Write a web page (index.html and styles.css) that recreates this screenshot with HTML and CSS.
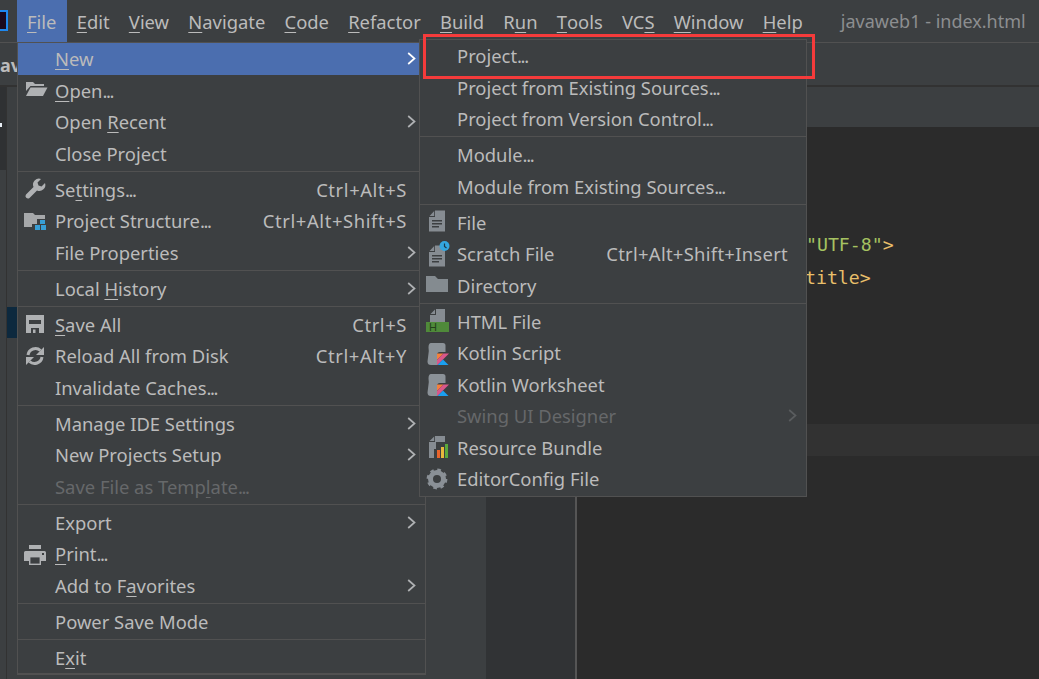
FILE: index.html
```html
<!DOCTYPE html>
<html lang="en">
<head>
<meta charset="utf-8">
<title>javaweb1 - index.html</title>
<link rel="stylesheet" href="styles.css">
</head>
<body>
<svg class="defs" width="0" height="0" aria-hidden="true">
  <defs>
    <symbol id="chev" viewBox="0 0 9 13"><path d="M1.2 1 7.5 6.5 1.2 12" fill="none" stroke="currentColor" stroke-width="1.7"/></symbol>
    <symbol id="doc" viewBox="0 0 24 24"><path d="M9 0.5h10v21H3V7h6zM3.6 6 8.2 1v5z" fill="#868c92"/><path d="M6 10h10v1.4H6zM6 13h10v1.4H6zM6 16h7v1.4H6z" fill="#3c3f41"/></symbol>
    <symbol id="kt" viewBox="0 0 24 24"><path d="M5 2h12a2.500 2.500 0 0 1 2.500 2.500V11H14a3 3 0 0 0-3 3v10H5q-3.500 0-3.500-3.500l1-8q.5-3 0-6Q2.500 2 5 2z" fill="#8b9298"/><path d="M11 12.500h6.500L11 19z" fill="#f5803c"/><path d="M17.500 12.500H23L11 24.500V19z" fill="#d9578a"/><path d="M11 24.500l6-6 6 6z" fill="#1a9ff0"/></symbol>
  </defs>
</svg>

<div class="ide">
  <header class="menubar">
    <span class="logo"></span>
    <nav class="menus">
      <span class="top active"><u>F</u>ile</span>
      <span class="top"><u>E</u>dit</span>
      <span class="top"><u>V</u>iew</span>
      <span class="top"><u>N</u>avigate</span>
      <span class="top"><u>C</u>ode</span>
      <span class="top"><u>R</u>efactor</span>
      <span class="top"><u>B</u>uild</span>
      <span class="top">R<u>u</u>n</span>
      <span class="top"><u>T</u>ools</span>
      <span class="top">VC<u>S</u></span>
      <span class="top"><u>W</u>indow</span>
      <span class="top"><u>H</u>elp</span>
    </nav>
    <span class="title">javaweb1 - index.html</span>
  </header>
  <div class="toolbar"><b class="crumb">av</b></div>
  <div class="main">
    <div class="rail"><div class="rail-dark"><i class="rail-mark"></i></div></div>
    <div class="strip"><div class="strip-sel"></div></div>
    <div class="content">
      <div class="tabs"></div>
      <div class="edit-row">
        <div class="panel"></div>
        <div class="gutter"></div>
        <div class="editor">
          <div class="ln"></div>
          <div class="ln"></div>
          <div class="ln"></div>
          <div class="ln ln-meta"><span class="s">"UTF-8"</span><span class="t">&gt;</span></div>
          <div class="ln ln-title"><span class="t">title&gt;</span></div>
          <div class="ln"></div>
          <div class="ln"></div>
          <div class="ln"></div>
          <div class="ln"></div>
          <div class="ln cur"></div>
        </div>
      </div>
    </div>
  </div>
</div>

<div class="menu file-menu">
  <div class="row sel"><span class="ic"></span><span class="lb"><u>N</u>ew</span><svg class="chev white"><use href="#chev"/></svg></div>
  <div class="row"><svg class="ic" viewBox="0 0 24 24"><path d="M2 4h7l2 2h9v2H6.500L2 13z" fill="#afb1b3"/><path d="M6.500 9.500H23.500L19 18H2z" fill="#afb1b3"/></svg><span class="lb"><u>O</u>pen<span class="dots">...</span></span></div>
  <div class="row"><span class="ic"></span><span class="lb">Open <u>R</u>ecent</span><svg class="chev"><use href="#chev"/></svg></div>
  <div class="row"><span class="ic"></span><span class="lb">Close Project</span></div>
  <div class="sep"></div>
  <div class="row"><svg class="ic" viewBox="0 0 24 24"><path d="M21 6l-3.500 3.500-3-1-1-3L17 2a6 6 0 0 0-7.500 8L2 17.500A2.500 2.500 0 0 0 5.500 21L13 13.500A6 6 0 0 0 21 6z" fill="#afb1b3"/></svg><span class="lb">Se<u>t</u>tings<span class="dots">...</span></span><span class="key">Ctrl+Alt+S</span></div>
  <div class="row"><svg class="ic" viewBox="0 0 24 24"><path d="M0 4h9l2 2h10v4h-8v5H8v3H0z" fill="#a6a8aa"/><path d="M16 11h5v4h-5zM11 16h5v5h-5zM17 16h5v5h-5z" fill="#389fd6"/></svg><span class="lb">Project Structure<span class="dots">...</span></span><span class="key">Ctrl+Alt+Shift+S</span></div>
  <div class="row"><span class="ic"></span><span class="lb">File Properties</span><svg class="chev"><use href="#chev"/></svg></div>
  <div class="sep"></div>
  <div class="row"><span class="ic"></span><span class="lb">Local <u>H</u>istory</span><svg class="chev"><use href="#chev"/></svg></div>
  <div class="sep"></div>
  <div class="row"><svg class="ic" viewBox="0 0 24 24"><path fill-rule="evenodd" d="M2 3h18v18H2zM5 8v4h12V8zM7 16v5h8v-5zM9 17.500h2.500V21H9z" fill="#afb1b3"/></svg><span class="lb"><u>S</u>ave All</span><span class="key">Ctrl+S</span></div>
  <div class="row"><svg class="ic" viewBox="0 0 24 24"><path d="M4 11a7.500 7.500 0 0 1 12.500-4.500M18 13a7.500 7.500 0 0 1-12.500 4.500" fill="none" stroke="#afb1b3" stroke-width="3"/><path d="M20 3v8h-8zM2 21v-8h8z" fill="#afb1b3"/></svg><span class="lb">Reload All from Disk</span><span class="key">Ctrl+Alt+Y</span></div>
  <div class="row"><span class="ic"></span><span class="lb">Invalidate Caches<span class="dots">...</span></span></div>
  <div class="sep"></div>
  <div class="row"><span class="ic"></span><span class="lb">Manage IDE Settings</span><svg class="chev"><use href="#chev"/></svg></div>
  <div class="row"><span class="ic"></span><span class="lb">New Projects Setup</span><svg class="chev"><use href="#chev"/></svg></div>
  <div class="row off"><span class="ic"></span><span class="lb">Save File as Temp<u>l</u>ate<span class="dots">...</span></span></div>
  <div class="sep"></div>
  <div class="row"><span class="ic"></span><span class="lb">Export</span><svg class="chev"><use href="#chev"/></svg></div>
  <div class="row"><svg class="ic" viewBox="0 0 24 24"><path d="M5 3h12v4H5zM1.500 9h19A1.500 1.500 0 0 1 22 10.500V19H0v-8.500A1.500 1.500 0 0 1 1.500 9z" fill="#afb1b3"/><rect x="5.700" y="14.700" width="10.600" height="7.600" fill="#3c3f41" stroke="#afb1b3" stroke-width="1.400"/><rect x="18" y="11" width="2" height="2" fill="#3c3f41"/></svg><span class="lb"><u>P</u>rint<span class="dots">...</span></span></div>
  <div class="row"><span class="ic"></span><span class="lb">Add to F<u>a</u>vorites</span><svg class="chev"><use href="#chev"/></svg></div>
  <div class="sep"></div>
  <div class="row"><span class="ic"></span><span class="lb">Power Save Mode</span></div>
  <div class="sep"></div>
  <div class="row"><span class="ic"></span><span class="lb">E<u>x</u>it</span></div>
</div>

<div class="menu new-menu">
  <div class="row"><span class="ic"></span><span class="lb">Project<span class="dots">...</span></span></div>
  <div class="row"><span class="ic"></span><span class="lb">Project from Existing Sources<span class="dots">...</span></span></div>
  <div class="row"><span class="ic"></span><span class="lb">Project from Version Control<span class="dots">...</span></span></div>
  <div class="sep"></div>
  <div class="row"><span class="ic"></span><span class="lb">Module<span class="dots">...</span></span></div>
  <div class="row"><span class="ic"></span><span class="lb">Module from Existing Sources<span class="dots">...</span></span></div>
  <div class="sep"></div>
  <div class="row"><svg class="ic"><use href="#doc"/></svg><span class="lb">File</span></div>
  <div class="row"><svg class="ic" viewBox="0 0 24 24"><use href="#doc" y="3" width="24" height="24"/><circle cx="18.500" cy="4" r="5" fill="#34a7e0"/><path d="M18.500 1.500V4.500L20.500 6" fill="none" stroke="#1c3a4a" stroke-width="1.200"/></svg><span class="lb">Scratch File</span><span class="key key-tight">Ctrl+Alt+Shift+Insert</span></div>
  <div class="row"><svg class="ic" viewBox="0 0 24 24"><path d="M0 3h9l3 3h10v13H0z" fill="#848b90"/></svg><span class="lb">Directory</span></div>
  <div class="sep"></div>
  <div class="row"><svg class="ic" viewBox="0 0 24 24"><path d="M10 0h9v13H4V6h6zM4.500 5 9 .5V5z" fill="#868c92"/><rect y="13" width="23" height="10" fill="#4f8a3a"/><text x="3" y="22" class="h-mark">H</text></svg><span class="lb">HTML File</span></div>
  <div class="row"><svg class="ic"><use href="#kt"/></svg><span class="lb">Kotlin Script</span></div>
  <div class="row"><svg class="ic"><use href="#kt"/></svg><span class="lb">Kotlin Worksheet</span></div>
  <div class="row off"><span class="ic"></span><span class="lb">Swing UI Designer</span><svg class="chev dim"><use href="#chev"/></svg></div>
  <div class="row"><svg class="ic" viewBox="0 0 24 24"><path d="M9 1h10v6h-9v7H8v9H3V7h6zM3.600 6 8.200 1.500V6z" fill="#868c92"/><rect x="11" y="15" width="3" height="8" fill="#e8642c"/><rect x="15" y="12" width="3" height="11" fill="#e8b83c"/><rect x="19" y="9" width="3" height="14" fill="#5aa83c"/></svg><span class="lb">Resource Bundle</span></div>
  <div class="row"><svg class="ic" viewBox="0 0 24 24"><circle cx="11" cy="12" r="6.500" fill="none" stroke="#8a9096" stroke-width="5"/><circle cx="11" cy="12" r="9.200" fill="none" stroke="#8a9096" stroke-width="2.400" stroke-dasharray="3.600 3.630"/></svg><span class="lb">EditorConfig File</span></div>
</div>

<div class="callout"></div>
</body>
</html>
```
FILE: styles.css
```css
* { box-sizing: border-box; }
html, body { margin: 0; height: 100%; }
body {
  width: 1039px;
  height: 679px;
  overflow: hidden;
  position: relative;
  background: #3c3f41;
  color: #bbbbbb;
  font-family: "Noto Sans", "Open Sans", sans-serif;
  font-size: 18.4px;
}
u { text-underline-offset: 3px; text-decoration-thickness: 1px; }
.defs { position: absolute; }
.dots { letter-spacing: -1.4px; }

.ide { display: flex; flex-direction: column; height: 679px; }

.menubar {
  display: flex;
  align-items: center;
  height: 43px;
  flex: none;
  border-bottom: 1px solid #515151;
}
.logo {
  width: 8px;
  height: 21px;
  margin-right: 9px;
  margin-top: -1px;
  background: #1a0a20;
  border: 2px solid #1e88f0;
  border-left: 0;
  flex: none;
}
.menus { display: flex; height: 42px; align-items: stretch; }
.top { display: flex; align-items: center; padding: 0 9.6px; white-space: pre; }
.top.active { background: #4b6eaf; padding: 0 10.7px 0 10px; }
.title { margin-left: 28.5px; font-size: 18px; color: #8c8e90; white-space: nowrap; }

.toolbar { flex: none; display: flex; align-items: center; border-bottom: 2px solid #323232; height: 44px; }
.crumb { font-size: 18px; font-weight: 700; margin-top: 1px; line-height: 1; }

.main { flex: 1; display: flex; min-height: 0; }
.rail { width: 7px; border-right: 1px solid #323232; flex: none; }
.rail-dark { height: 83px; background: #2f3133; padding-top: 36px; }
.rail-mark { display: block; width: 2px; height: 4px; background: #e8eef5; }
.strip { width: 10px; flex: none; padding-top: 220px; }
.strip-sel { height: 31px; background: #0d293e; }

.content { flex: 1; display: flex; flex-direction: column; min-width: 0; }
.tabs { height: 40px; flex: none; }
.edit-row { flex: 1; display: flex; min-height: 0; }
.panel { width: 469px; flex: none; }
.gutter { width: 91px; flex: none; background: #313335; border-right: 2px solid #555555; }
.editor {
  flex: 1;
  background: #2b2b2b;
  padding-top: 5px;
  font-family: "DejaVu Sans Mono", monospace;
  font-size: 18.2px;
  color: #a9b7c6;
  overflow: hidden;
}
.ln { height: 32.4px; line-height: 32.4px; white-space: pre; }
.ln-meta { padding-left: 229px; }
.ln-title { padding-left: 228px; }
.cur { background: #323232; }
.t { color: #e8bf6a; }
.s { color: #a5c261; }

.menu {
  position: absolute;
  background: #3c3f41;
  border: 1px solid #515151;
}
.file-menu { left: 17px; top: 42px; width: 409px; height: 633px; border-bottom-width: 2px; }
.new-menu { left: 419px; top: 39.2px; width: 388px; height: 457.8px; }

.row { display: flex; align-items: center; height: 31.5px; padding-right: 18px; white-space: nowrap; }
.row.sel { background: #4b6eaf; }
.row.off { color: #66686a; }
.ic { width: 24px; height: 24px; margin: 0 7px 0 6px; flex: none; overflow: visible; }
.lb { flex: 1; }
.key { flex: none; letter-spacing: 0.6px; }
.key-tight { letter-spacing: 0.3px; }
.chev { width: 9px; height: 13px; color: #afb1b3; flex: none; margin-right: -9px; }
.chev.white { color: #ffffff; }
.chev.dim { color: #5a5d5f; }
.sep { height: 4.5px; padding-top: 1.5px; }
.sep::before { content: ""; display: block; height: 1px; background: #515151; }
.h-mark { font-family: "Liberation Sans", sans-serif; font-size: 11px; fill: #24401b; }

.callout {
  position: absolute;
  left: 423px;
  top: 34px;
  width: 392px;
  height: 45px;
  border: 3px solid #f53b3b;
}
```
